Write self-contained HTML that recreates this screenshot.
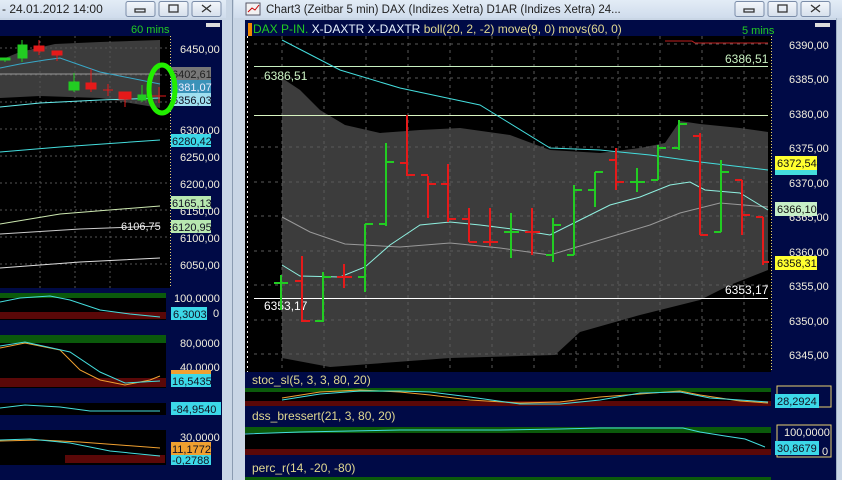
<!DOCTYPE html>
<html><head><style>
body{margin:0;width:842px;height:480px;overflow:hidden;background:#c9d6e5;font-family:"Liberation Sans",sans-serif}
svg{position:absolute;left:0;top:0}
text{font-family:"Liberation Sans",sans-serif;font-size:11px}
</style></head><body>
<svg width="842" height="480" viewBox="0 0 842 480">
<defs>
<linearGradient id="tb" x1="0" y1="0" x2="0" y2="1"><stop offset="0" stop-color="#e3ecf6"/><stop offset="1" stop-color="#cfdcec"/></linearGradient>
<linearGradient id="bt" x1="0" y1="0" x2="0" y2="1"><stop offset="0" stop-color="#f4f7fb"/><stop offset="1" stop-color="#d6e0ec"/></linearGradient>
</defs>
<rect x="0" y="0" width="842" height="480" fill="#c9d6e5"/>
<rect x="0" y="0" width="226" height="18" fill="url(#tb)"/>
<rect x="234" y="0" width="608" height="18" fill="url(#tb)"/>
<line x1="232.5" y1="0" x2="232.5" y2="480" stroke="#8a9bb0"/>
<line x1="836.5" y1="18" x2="836.5" y2="480" stroke="#9fb0c4"/>
<text x="2" y="13" fill="#222" style="font-size:12px">- 24.01.2012 14:00</text>
<text x="266" y="13" fill="#222" style="font-size:11.5px">Chart3 (Zeitbar 5 min)  DAX (Indizes Xetra) D1AR (Indizes Xetra) 24...</text>
<g stroke="#7a8ca8" fill="url(#bt)">
<rect x="126" y="1.5" width="29" height="15" rx="2"/><rect x="159" y="1.5" width="29" height="15" rx="2"/><rect x="192" y="1.5" width="29" height="15" rx="2"/>
<rect x="735" y="1.5" width="29" height="15" rx="2"/><rect x="768" y="1.5" width="29" height="15" rx="2"/><rect x="801" y="1.5" width="29" height="15" rx="2"/>
</g>
<g stroke="#333" fill="none" stroke-width="1.3">
<rect x="135" y="9" width="10" height="3"/><rect x="169" y="5" width="9" height="7"/><path d="M202 5l9 7M211 5l-9 7"/>
<rect x="744" y="9" width="10" height="3"/><rect x="778" y="5" width="9" height="7"/><path d="M811 5l9 7M820 5l-9 7"/>
</g>
<rect x="246" y="3" width="14" height="12" fill="#f2f2f2" stroke="#556"/><path d="M248 12l4-4 3 2 4-5" stroke="#c00" fill="none"/>

<!-- LEFT CHART -->
<rect x="0" y="20" width="222" height="460" fill="#000a46"/>
<rect x="0" y="36" width="170" height="252" fill="#000"/>
<text x="131" y="33" fill="#22cc22">60 mins</text>
<rect x="206" y="23" width="14" height="4" fill="#ddd"/>
<polygon points="0,60 20,52 55,44 100,42 160,40 160,108 100,98 40,96 0,98" fill="#3c3c3c"/>
<g stroke="#555" stroke-dasharray="2,3"><line x1="0" y1="48" x2="168" y2="48"/><line x1="0" y1="75" x2="168" y2="75"/><line x1="0" y1="102" x2="168" y2="102"/><line x1="0" y1="129" x2="168" y2="129"/><line x1="0" y1="156" x2="168" y2="156"/><line x1="0" y1="183" x2="168" y2="183"/><line x1="0" y1="210" x2="168" y2="210"/><line x1="0" y1="237" x2="168" y2="237"/><line x1="0" y1="264" x2="168" y2="264"/><line x1="40" y1="36" x2="40" y2="288"/><line x1="75" y1="36" x2="75" y2="288"/><line x1="110" y1="36" x2="110" y2="288"/></g>
<line x1="0" y1="74" x2="160" y2="74" stroke="#999"/>
<polyline points="0,68 20,64 45,60 60,58 100,72 160,84" fill="none" stroke="#38a8c8"/>
<polyline points="0,107 40,103 100,100 160,98" fill="none" stroke="#6ee"/>
<polyline points="0,152 60,147 160,140" fill="none" stroke="#4dd"/>
<polyline points="0,224 60,214 160,206" fill="none" stroke="#cde8b0"/>
<polyline points="0,268 80,262 160,258" fill="none" stroke="#ddd"/>
<polyline points="0,234 80,229 160,226" fill="none" stroke="#ccc"/>
<g stroke="#22cc22" fill="#22cc22"><line x1="5" y1="59" x2="5" y2="62"/><rect x="0" y="58" width="10" height="2"/><rect x="18" y="45" width="9" height="13"/><line x1="22" y1="40" x2="22" y2="62"/><rect x="69" y="82" width="10" height="8"/><line x1="74" y1="73" x2="74" y2="92"/><line x1="142" y1="85" x2="142" y2="102"/><rect x="138" y="95" width="8" height="5"/></g>
<g stroke="#e51a1a" fill="#e51a1a"><rect x="34" y="46" width="10" height="5"/><line x1="39" y1="40" x2="39" y2="55"/><rect x="52" y="51" width="10" height="4"/><line x1="57" y1="51" x2="57" y2="61"/><rect x="86" y="83" width="10" height="6"/><line x1="91" y1="69" x2="91" y2="92"/><line x1="103" y1="90" x2="113" y2="90"/><line x1="108" y1="84" x2="108" y2="96"/><rect x="119" y="92" width="12" height="7"/><line x1="125" y1="92" x2="125" y2="107"/><line x1="152" y1="96" x2="166" y2="96"/><line x1="159" y1="87" x2="159" y2="103"/></g>
<line x1="170.5" y1="36" x2="170.5" y2="288" stroke="#e8d070" stroke-dasharray="1,2"/>
<g fill="#f2eedd"><text x="180" y="53">6450,00</text><text x="180" y="134">6300,00</text><text x="180" y="161">6250,00</text><text x="180" y="188">6200,00</text><text x="180" y="215">6150,00</text><text x="180" y="242">6100,00</text><text x="180" y="269">6050,00</text></g>
<rect x="171" y="67" width="40" height="13" fill="#777"/><text x="172" y="78" fill="#222">6402,61</text>
<rect x="171" y="80" width="40" height="13" fill="#3a92b8"/><text x="172" y="91" fill="#eef">6381,07</text>
<rect x="171" y="93" width="40" height="13" fill="#a0e0f0"/><text x="172" y="104" fill="#112">6356,03</text>
<rect x="171" y="134" width="40" height="13" fill="#3cd8e8"/><text x="172" y="145" fill="#112">6280,42</text>
<rect x="171" y="196" width="40" height="13" fill="#b8e8b0"/><text x="172" y="207" fill="#112">6165,13</text>
<rect x="171" y="220" width="40" height="13" fill="#b8e8b0"/><text x="172" y="231" fill="#112">6120,95</text>
<text x="121" y="230" fill="#eee">6106,75</text>
<ellipse cx="162" cy="89" rx="13" ry="24" fill="none" stroke="#22ee00" stroke-width="5"/>
<rect x="0" y="293" width="166" height="27" fill="#000"/><rect x="0" y="293" width="166" height="5" fill="#0b5a0b"/><rect x="0" y="312" width="166" height="7" fill="#5a0808"/>
<polyline points="0,302 20,298 50,296 70,300 100,310 130,314 160,317" fill="none" stroke="#4dd"/>
<rect x="0" y="335" width="166" height="53" fill="#000"/><rect x="0" y="335" width="166" height="8" fill="#0b5a0b"/><rect x="0" y="378" width="166" height="9" fill="#5a0808"/>
<polyline points="0,348 25,343 60,350 80,370 100,380 125,385 150,380 160,376" fill="none" stroke="#f0a030"/>
<polyline points="0,346 25,342 70,352 100,372 125,383 160,381" fill="none" stroke="#4dd"/>
<rect x="0" y="403" width="166" height="12" fill="#000"/><polyline points="0,408 25,405 60,407 90,411 160,411" fill="none" stroke="#4dd"/>
<rect x="0" y="430" width="166" height="35" fill="#000"/><rect x="65" y="455" width="100" height="8" fill="#5a0808"/>
<polyline points="0,441 40,440 80,442 120,445 160,448" fill="none" stroke="#f0a030"/>
<polyline points="0,440 30,439 70,443 110,451 160,456" fill="none" stroke="#4dd"/>
<g fill="#f2eedd"><text x="174" y="302">100,0000</text><text x="213" y="317">0</text><text x="180" y="347">80,0000</text><text x="180" y="371">40,0000</text><text x="180" y="441">30,0000</text></g>
<rect x="171" y="307" width="36" height="13" fill="#3cd8e8"/><text x="173" y="318" fill="#112">6,3003</text>
<rect x="171" y="370" width="40" height="9" fill="#f0a030"/><rect x="171" y="374" width="40" height="13" fill="#3cd8e8"/><text x="172" y="385" fill="#112">16,5435</text>
<rect x="171" y="402" width="50" height="13" fill="#3cd8e8"/><text x="173" y="413" fill="#112">-84,9540</text>
<rect x="171" y="442" width="40" height="13" fill="#f0a030"/><text x="172" y="453" fill="#112">11,1772</text>
<rect x="171" y="455" width="40" height="10" fill="#3cd8e8"/><text x="172" y="464" fill="#112">-0,2788</text>

<!-- RIGHT CHART -->
<rect x="245" y="20" width="591" height="460" fill="#000a46"/>
<rect x="248" y="23" width="4" height="13" fill="#f08a00"/>
<text x="253" y="33" style="font-size:12px"><tspan fill="#22cc22">DAX P-IN.</tspan><tspan fill="#e8f4ff"> X-DAXTR X-DAXTR </tspan><tspan fill="#e0d890">boll(20, 2, -2) move(9, 0) movs(60, 0)</tspan></text>
<text x="742" y="34" fill="#22cc22">5 mins</text>
<rect x="815" y="23" width="15" height="4" fill="#ddd"/>
<rect x="245" y="36" width="526" height="336" fill="#000"/>
<line x1="247.5" y1="36" x2="247.5" y2="372" stroke="#eee" stroke-dasharray="2,3"/>
<polygon points="282,78 300,90 320,110 345,125 380,133 420,130 460,128 510,135 550,150 600,153 640,148 665,143 680,121 700,124 740,128 768,132 768,270 730,285 700,300 640,315 580,332 555,355 450,358 330,367 282,358" fill="#3c3c3c"/>
<g stroke="#5a5a5a" stroke-dasharray="3,4">
<line x1="254" y1="44" x2="768" y2="44"/><line x1="254" y1="78" x2="768" y2="78"/><line x1="254" y1="147" x2="768" y2="147"/><line x1="254" y1="182" x2="768" y2="182"/><line x1="254" y1="216" x2="768" y2="216"/><line x1="254" y1="251" x2="768" y2="251"/><line x1="254" y1="285" x2="768" y2="285"/><line x1="254" y1="320" x2="768" y2="320"/><line x1="254" y1="354" x2="768" y2="354"/>
<line x1="282" y1="36" x2="282" y2="372"/><line x1="324" y1="36" x2="324" y2="372"/><line x1="366" y1="36" x2="366" y2="372"/><line x1="408" y1="36" x2="408" y2="372"/><line x1="450" y1="36" x2="450" y2="372"/><line x1="492" y1="36" x2="492" y2="372"/><line x1="534" y1="36" x2="534" y2="372"/><line x1="576" y1="36" x2="576" y2="372"/><line x1="618" y1="36" x2="618" y2="372"/><line x1="660" y1="36" x2="660" y2="372"/><line x1="702" y1="36" x2="702" y2="372"/><line x1="744" y1="36" x2="744" y2="372"/>
</g>
<line x1="254" y1="66.5" x2="768" y2="66.5" stroke="#c8f0c0"/>
<line x1="254" y1="115.5" x2="768" y2="115.5" stroke="#d8f4c0"/>
<line x1="254" y1="298.5" x2="768" y2="298.5" stroke="#fff"/>
<text x="264" y="80" fill="#c8f0c0" style="font-size:12px">6386,51</text><text x="725" y="63" fill="#c8f0c0" style="font-size:12px">6386,51</text>
<text x="264" y="310" fill="#fff" style="font-size:12px">6353,17</text><text x="725" y="294" fill="#fff" style="font-size:12px">6353,17</text>
<polyline points="665,41 692,41 695,43 768,43" fill="none" stroke="#c02020"/>
<polyline points="282,40 340,70 400,88 480,105 550,148 600,150 650,155 700,162 768,170" fill="none" stroke="#4dd"/>
<polyline points="282,217 310,232 345,244 400,247 450,243 500,248 550,255 600,240 650,225 680,213 720,203 768,207" fill="none" stroke="#999"/>
<polyline points="282,265 300,276 340,277 365,267 390,245 420,225 450,222 480,225 520,230 550,235 580,220 610,205 640,197 670,185 690,182 705,190 740,193 768,210" fill="none" stroke="#8ff0e0"/>
<g stroke-width="2" fill="none">
<g stroke="#22cc22"><path d="M281 275v35M274 283h7M281 283h7"/><path d="M323 272v50M315 321h8M323 277h8"/><path d="M365 224v68M358 277h7M365 224h8"/><path d="M386 143v83M379 224h7M386 162h8"/><path d="M511 213v45M504 232h7M511 232h8"/><path d="M553 218v44M546 255h7M553 225h8"/><path d="M574 185v70M567 255h7M574 190h8"/><path d="M595 172v35M588 190h7M595 172h8"/><path d="M637 168v24M630 182h7M637 182h8"/><path d="M658 145v35M651 180h7M658 148h8"/><path d="M679 120v30M672 148h7M679 124h8"/><path d="M721 160v72M714 232h7M721 172h8"/></g>
<g stroke="#e51a1a"><path d="M302 256v66M295 281h7M302 321h8"/><path d="M344 264v24M337 277h7M344 277h8"/><path d="M407 115v61M400 163h7M407 175h8"/><path d="M428 176v42M421 175h7M428 184h8"/><path d="M448 164v58M441 184h7M448 219h8"/><path d="M469 208v34M462 219h7M469 242h8"/><path d="M490 208v38M483 242h7M490 242h8"/><path d="M532 208v47M525 232h7M532 232h8"/><path d="M616 148v42M609 160h7M616 182h8"/><path d="M700 133v102M693 136h7M700 235h8"/><path d="M742 180v55M735 180h7M742 215h8"/><path d="M763 217v48M756 217h7M763 262h6"/></g>
</g>
<line x1="771.5" y1="36" x2="771.5" y2="372" stroke="#e8d070" stroke-dasharray="1,2"/>
<g fill="#f2eedd"><text x="789" y="49">6390,00</text><text x="789" y="83">6385,00</text><text x="789" y="118">6380,00</text><text x="789" y="152">6375,00</text><text x="789" y="187">6370,00</text><text x="789" y="221">6365,00</text><text x="789" y="256">6360,00</text><text x="789" y="290">6355,00</text><text x="789" y="325">6350,00</text><text x="789" y="359">6345,00</text></g>
<rect x="775" y="156" width="42" height="14" fill="#ffff30"/><text x="777" y="167" fill="#111">6372,54</text>
<rect x="775" y="170" width="42" height="5" fill="#4dd"/>
<rect x="775" y="202" width="42" height="14" fill="#c8f0c8"/><text x="777" y="213" fill="#111">6366,10</text>
<rect x="775" y="256" width="42" height="14" fill="#ffff30"/><text x="777" y="267" fill="#111">6358,31</text>
<text x="252" y="384" fill="#e0d890" style="font-size:12px">stoc_sl(5, 3, 3, 80, 20)</text>
<rect x="245" y="388" width="526" height="17" fill="#000"/><rect x="245" y="388" width="526" height="4" fill="#0b5a0b"/><rect x="245" y="401" width="526" height="5" fill="#5a0808"/>
<polyline points="282,398 320,392 360,390 400,392 430,395 470,400 520,403 560,402 600,397 640,394 680,391 700,395 740,401 768,403" fill="none" stroke="#f0a030"/>
<polyline points="282,400 320,394 360,391 400,391 430,392 470,397 520,404 560,404 600,400 640,393 680,392 710,398 740,400 768,402" fill="none" stroke="#4dd"/>
<text x="252" y="420" fill="#e0d890" style="font-size:12px">dss_bressert(21, 3, 80, 20)</text>
<rect x="245" y="427" width="526" height="28" fill="#000"/><rect x="245" y="427" width="526" height="6" fill="#0b5a0b"/><rect x="245" y="449" width="526" height="6" fill="#5a0808"/>
<polyline points="245,434 300,432 400,430 500,430 560,429 600,428 683,428 700,432 725,436 745,439 765,447" fill="none" stroke="#4dd"/>
<text x="252" y="472" fill="#e0d890" style="font-size:12px">perc_r(14, -20, -80)</text>
<rect x="245" y="477" width="526" height="3" fill="#0b5a0b"/>
<g stroke="#e8d070"><path d="M777 386h54v21h-54z" fill="none"/><path d="M777 425h54v32h-54z" fill="none"/></g>
<rect x="775" y="394" width="44" height="14" fill="#3cd8e8"/><text x="777" y="405" fill="#112">28,2924</text>
<text x="784" y="436" fill="#f2eedd">100,0000</text><text x="822" y="455" fill="#f2eedd">0</text>
<rect x="775" y="441" width="44" height="14" fill="#3cd8e8"/><text x="777" y="452" fill="#112">30,8679</text>
</svg>
</body></html>
